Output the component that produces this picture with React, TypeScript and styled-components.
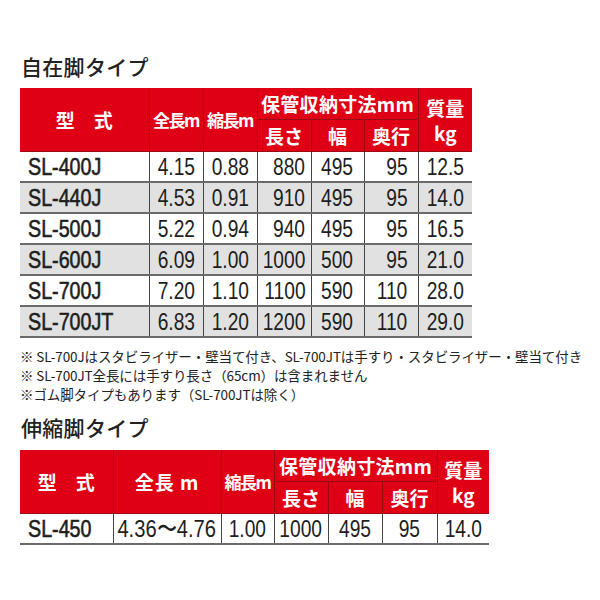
import React from "react";
import styled, { createGlobalStyle } from "styled-components";

const Global = createGlobalStyle`
  html, body { margin: 0; padding: 0; background: #fff; }
  body { font-family: "Noto Sans CJK JP", "Noto Sans", sans-serif; color: #222; }
`;

const Page = styled.div`
  width: 600px;
  height: 600px;
  box-sizing: border-box;
  padding: 53px 0 0 20px;
  overflow: hidden;
`;

const Title = styled.h2<{ $mt?: number }>`
  margin: ${(p) => p.$mt ?? 0}px 0 0 1px;
  font-family: "Noto Sans CJK JP", sans-serif;
  font-weight: 500;
  font-size: 21px;
  line-height: 26px;
  height: 26px;
  letter-spacing: 0.3px;
  color: #222;
`;

const Table = styled.table<{ $w: number; $mt: number }>`
  width: ${(p) => p.$w}px;
  margin-top: ${(p) => p.$mt}px;
  border-collapse: collapse;
  table-layout: fixed;
`;

const Col = styled.col<{ $w: number }>`
  width: ${(p) => p.$w}px;
`;

const HeadCell = styled.th<{ $size?: number; $ls?: number }>`
  background: #e00016;
  color: #fff;
  font-family: "Noto Sans CJK JP", sans-serif;
  font-weight: 700;
  font-size: ${(p) => p.$size ?? 19}px;
  letter-spacing: ${(p) => p.$ls ?? 0}px;
  line-height: 1;
  height: 31px;
  padding: 0;
  text-align: center;
  vertical-align: middle;
  white-space: nowrap;
  border: 1px solid #9a0a14;
  border-top: none;
  &:first-child { border-left: none; }
  &:last-child { border-right: none; }
`;

const Kg = styled.span`
  display: inline-block;
  margin-top: 6px;
`;

const Row = styled.tr<{ $grey: boolean }>`
  background: ${(p) => (p.$grey ? "#e1e1e1" : "#fff")};
  border-bottom: 2px solid #6a6a6a;
`;

type Align = "left" | "center" | "right";

const Cell = styled.td`
  height: 29px;
  padding: 0;
  vertical-align: middle;
  border-left: 1px solid #444;
  border-right: 1px solid #444;
  &:first-child { border-left: none; }
  &:last-child { border-right: none; }
`;

const CellBox = styled.div<{ $align: Align; $pad: number }>`
  display: flex;
  align-items: center;
  justify-content: ${(p) => (p.$align === "left" ? "flex-start" : p.$align === "right" ? "flex-end" : "center")};
  padding: 0 ${(p) => p.$pad}px;
  white-space: nowrap;
`;

const Num = styled.span<{ $align: Align; $model?: boolean; $sx: number }>`
  flex: none;
  font-family: "Liberation Sans", Arial, sans-serif;
  font-size: 24px;
  line-height: 1;
  color: #1e1e1e;
  transform: scaleX(${(p) => p.$sx});
  transform-origin: ${(p) => p.$align} center;
  ${(p) => (p.$model ? "-webkit-text-stroke: 0.6px #1e1e1e;" : "")}
`;

const Notes = styled.div`
  margin-top: 9px;
  font-family: "Noto Sans CJK JP", sans-serif;
  font-size: 13.5px;
  line-height: 19px;
  color: #222;
  white-space: nowrap;
  letter-spacing: -0.1px;
`;

type R = [string, string, string, string, string, string, string];

const rows1: R[] = [
  ["SL-400J", "4.15", "0.88", "880", "495", "95", "12.5"],
  ["SL-440J", "4.53", "0.91", "910", "495", "95", "14.0"],
  ["SL-500J", "5.22", "0.94", "940", "495", "95", "16.5"],
  ["SL-600J", "6.09", "1.00", "1000", "500", "95", "21.0"],
  ["SL-700J", "7.20", "1.10", "1100", "590", "110", "28.0"],
  ["SL-700JT", "6.83", "1.20", "1200", "590", "110", "29.0"],
];

function V({
  children,
  align = "center",
  pad = 0,
  model,
  sx = 0.8,
}: {
  children: React.ReactNode;
  align?: Align;
  pad?: number;
  model?: boolean;
  sx?: number;
}) {
  return (
    <Cell>
      <CellBox $align={align} $pad={pad}>
        <Num $align={align} $model={model} $sx={sx}>
          {children}
        </Num>
      </CellBox>
    </Cell>
  );
}

function Header({ wide }: { wide?: boolean }) {
  return (
    <thead>
      <tr>
        <HeadCell rowSpan={2}>型　式</HeadCell>
        <HeadCell rowSpan={2} $size={wide ? 19 : 17} $ls={wide ? 1 : -1.5}>
          {wide ? "全長 m" : "全長m"}
        </HeadCell>
        <HeadCell rowSpan={2} $size={17} $ls={-1.5}>縮長m</HeadCell>
        <HeadCell colSpan={3} $ls={0.3}>保管収納寸法mm</HeadCell>
        <HeadCell rowSpan={2}>
          質量
          <br />
          <Kg>kg</Kg>
        </HeadCell>
      </tr>
      <tr>
        <HeadCell>長さ</HeadCell>
        <HeadCell>幅</HeadCell>
        <HeadCell>奥行</HeadCell>
      </tr>
    </thead>
  );
}

const widths1 = [129, 54, 54, 54, 53, 54, 54];
const widths2 = [93, 108, 53, 54, 54, 55, 52];

export default function App() {
  return (
    <Page>
      <Global />
      <Title>自在脚タイプ</Title>
      <Table $w={452} $mt={9}>
        <colgroup>
          {widths1.map((w, i) => (
            <Col key={i} $w={w} />
          ))}
        </colgroup>
        <Header />
        <tbody>
          {rows1.map((r, i) => (
            <Row key={r[0]} $grey={i % 2 === 1}>
              <V align="left" pad={8} model sx={0.82}>{r[0]}</V>
              <V>{r[1]}</V>
              <V>{r[2]}</V>
              <V align="right" pad={5}>{r[3]}</V>
              <V>{r[4]}</V>
              <V align="right" pad={10}>{r[5]}</V>
              <V>{r[6]}</V>
            </Row>
          ))}
        </tbody>
      </Table>
      <Notes>
        ※ SL-700Jはスタビライザー・壁当て付き、SL-700JTは手すり・スタビライザー・壁当て付き
        <br />
        ※ SL-700JT全長には手すり長さ（65cm）は含まれません
        <br />
        ※ゴム脚タイプもあります（SL-700JTは除く）
      </Notes>
      <Title $mt={10}>伸縮脚タイプ</Title>
      <Table $w={469} $mt={10}>
        <colgroup>
          {widths2.map((w, i) => (
            <Col key={i} $w={w} />
          ))}
        </colgroup>
        <Header wide />
        <tbody>
          <Row $grey={false}>
            <V align="left" pad={8} model sx={0.82}>SL-450</V>
            <V sx={0.84}>4.36〜4.76</V>
            <V>1.00</V>
            <V>1000</V>
            <V>495</V>
            <V>95</V>
            <V>14.0</V>
          </Row>
        </tbody>
      </Table>
    </Page>
  );
}
